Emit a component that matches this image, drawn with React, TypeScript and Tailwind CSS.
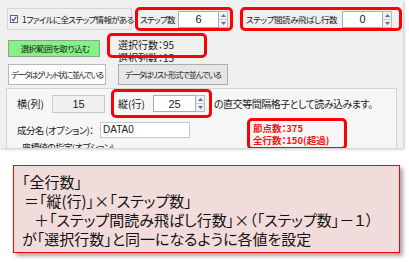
import React from "react";

function Spin() {
  return (
    <div className="flex flex-col w-[9px] h-full border border-l-0 border-[#b9bcc4] bg-[#eef0f4]">
      <div className="flex-1 flex items-center justify-center border-b border-[#c9ccd3]">
        <svg width="5" height="3" viewBox="0 0 5 3">
          <path d="M0 3 L2.5 0 L5 3 Z" fill="#5a6f96" />
        </svg>
      </div>
      <div className="flex-1 flex items-center justify-center">
        <svg width="5" height="3" viewBox="0 0 5 3">
          <path d="M0 0 L2.5 3 L5 0 Z" fill="#5a6f96" />
        </svg>
      </div>
    </div>
  );
}

function NumBox({ value, className }: { value: string; className: string }) {
  return (
    <div className="flex h-[17px]">
      <div
        className={`${className} h-full bg-white border border-[#abadb3] flex items-center justify-center text-[11px] font-['Liberation_Sans',sans-serif]`}
      >
        {value}
      </div>
      <Spin />
    </div>
  );
}

function Check() {
  return (
    <div className="w-[8px] h-[8px] border border-[#5b6577] bg-white flex items-center justify-center">
      <svg width="6" height="6" viewBox="0 0 6 6">
        <path d="M0.8 3 L2.4 4.8 L5.2 0.8" stroke="#2b4fb0" strokeWidth="1.2" fill="none" />
      </svg>
    </div>
  );
}

export default function App() {
  return (
    <div className="w-[409px] h-[262px] bg-white overflow-hidden font-['Noto_Sans_CJK_JP',sans-serif] [font-feature-settings:'palt'] text-[#1b1b1b]">
      <div className="w-[403px] h-[148px] bg-[#f0f0f0] overflow-hidden shadow-[1px_1px_3px_rgba(0,0,0,0.25)] text-[10px] leading-[12px]">
        {/* options row */}
        <div className="flex items-center h-[24px] mt-[7px] text-[8.5px]">
          <div className="ml-[7px] w-[125px] h-[22px] border border-[#d5d5d5] flex items-center pl-[2px]">
            <Check />
            <span className="ml-[4px] tracking-[-0.65px] whitespace-nowrap">1ファイルに全ステップ情報がある</span>
          </div>
          <div className="ml-[3px] w-[98px] h-[24px] border-[3px] border-[#ff0000] rounded-[5px] flex items-center pl-[2px]">
            <span className="w-[38px] whitespace-nowrap tracking-[-0.7px]">ステップ数</span>
            <NumBox value="6" className="w-[41px]" />
          </div>
          <div className="ml-[7px] w-[162px] h-[24px] border-[3px] border-[#ff0000] rounded-[5px] flex items-center pl-[3px]">
            <span className="w-[96px] whitespace-nowrap tracking-[-0.45px]">ステップ間読み飛ばし行数</span>
            <NumBox value="0" className="w-[41px]" />
          </div>
        </div>

        {/* import row */}
        <div className="flex items-start h-[31px] overflow-hidden">
          <button className="ml-[8px] mt-[9px] w-[92px] h-[17px] p-0 bg-[#84f184] border border-[#8aa58a] text-center leading-[15px] text-[8.5px] tracking-[-0.6px]">
            <span className="pl-[2px]">選択範囲を取り込む</span>
          </button>
          <div className="relative ml-[18px] mt-[7px] leading-[13px]">
            <div>選択行数：95</div>
            <div>選択列数：15</div>
            <div className="absolute -left-[11px] -top-[5px] w-[100px] h-[25px] border-[3px] border-[#ff0000] rounded-[5px]" />
          </div>
        </div>

        {/* mode tabs */}
        <div className="flex items-start h-[26px] pt-[2px] text-[8px]">
          <div className="ml-[8px] w-[98px] h-[21px] bg-[#fcfcfc] border border-[#b8b8b8] flex items-center justify-center tracking-[-1.2px] whitespace-nowrap">
            データはグリッド状に並んでいる
          </div>
          <div className="ml-[12px] w-[110px] h-[21px] bg-[#e6e6e6] border border-[#adadad] flex items-center justify-center tracking-[-1px] whitespace-nowrap">
            データはリスト形式で並んでいる
          </div>
        </div>

        {/* tab page */}
        <div className="ml-[6px] w-[391px] h-[70px] border border-[#d3d3d3] bg-[#f6f6f6]">
          <div className="flex items-center h-[29px] pl-[10px]">
            <span className="w-[35px] whitespace-nowrap">横(列)</span>
            <div className="w-[53px] h-[18px] bg-[#f0f0f0] border border-[#c8c8c8] flex items-center justify-center text-[11px] font-['Liberation_Sans',sans-serif]">
              15
            </div>
            <div className="ml-[6px] w-[101px] h-[29px] border-[3px] border-[#ff0000] rounded-[5px] flex items-center pl-[4px]">
              <span className="w-[35px] whitespace-nowrap">縦(行)</span>
              <NumBox value="25" className="w-[43px]" />
            </div>
            <span className="ml-[2px] whitespace-nowrap tracking-[-0.5px]">の直交等間隔格子として読み込みます。</span>
          </div>
          <div className="flex items-start h-[24px] pl-[10px]">
            <span className="mt-[4px] w-[83px] leading-[16px] whitespace-nowrap text-[9.5px] tracking-[-0.6px]">成分名 (オプション)：</span>
            <div className="mt-[4px] w-[90px] h-[16px] bg-white border border-[#c8c8c8] pl-[2px] flex items-center font-['Liberation_Sans',sans-serif]">
              DATA0
            </div>
            <div className="relative ml-[63px] mt-[4px] text-[#ff1010] text-[9.5px] font-bold whitespace-nowrap">
              <div>節点数：375</div>
              <div>全行数：150(超過)</div>
              <div className="absolute -left-[6px] -top-[4px] w-[100px] h-[32px] border-[3px] border-[#ff0000] rounded-[5px]" />
            </div>
          </div>
          <div className="pl-[15px] whitespace-nowrap text-[9px] tracking-[-0.6px]">座標値の指定(オプション)</div>
        </div>
      </div>

      {/* note */}
      <div className="mt-[17px] ml-[13px] w-[387px] h-[88px] border border-[#ff0000] bg-[#f2dcdb] shadow-[3px_3px_4px_rgba(0,0,0,0.35)] pt-[6px] pl-[8px] text-[15px] leading-[19px] text-[#111]">
        <div>「全行数」</div>
        <div className="pl-[2px]">＝「縦(行)」×「ステップ数」</div>
        <div className="pl-[12px]">＋「ステップ間読み飛ばし行数」×（「ステップ数」－１）</div>
        <div>が「選択行数」と同一になるように各値を設定</div>
      </div>
    </div>
  );
}
